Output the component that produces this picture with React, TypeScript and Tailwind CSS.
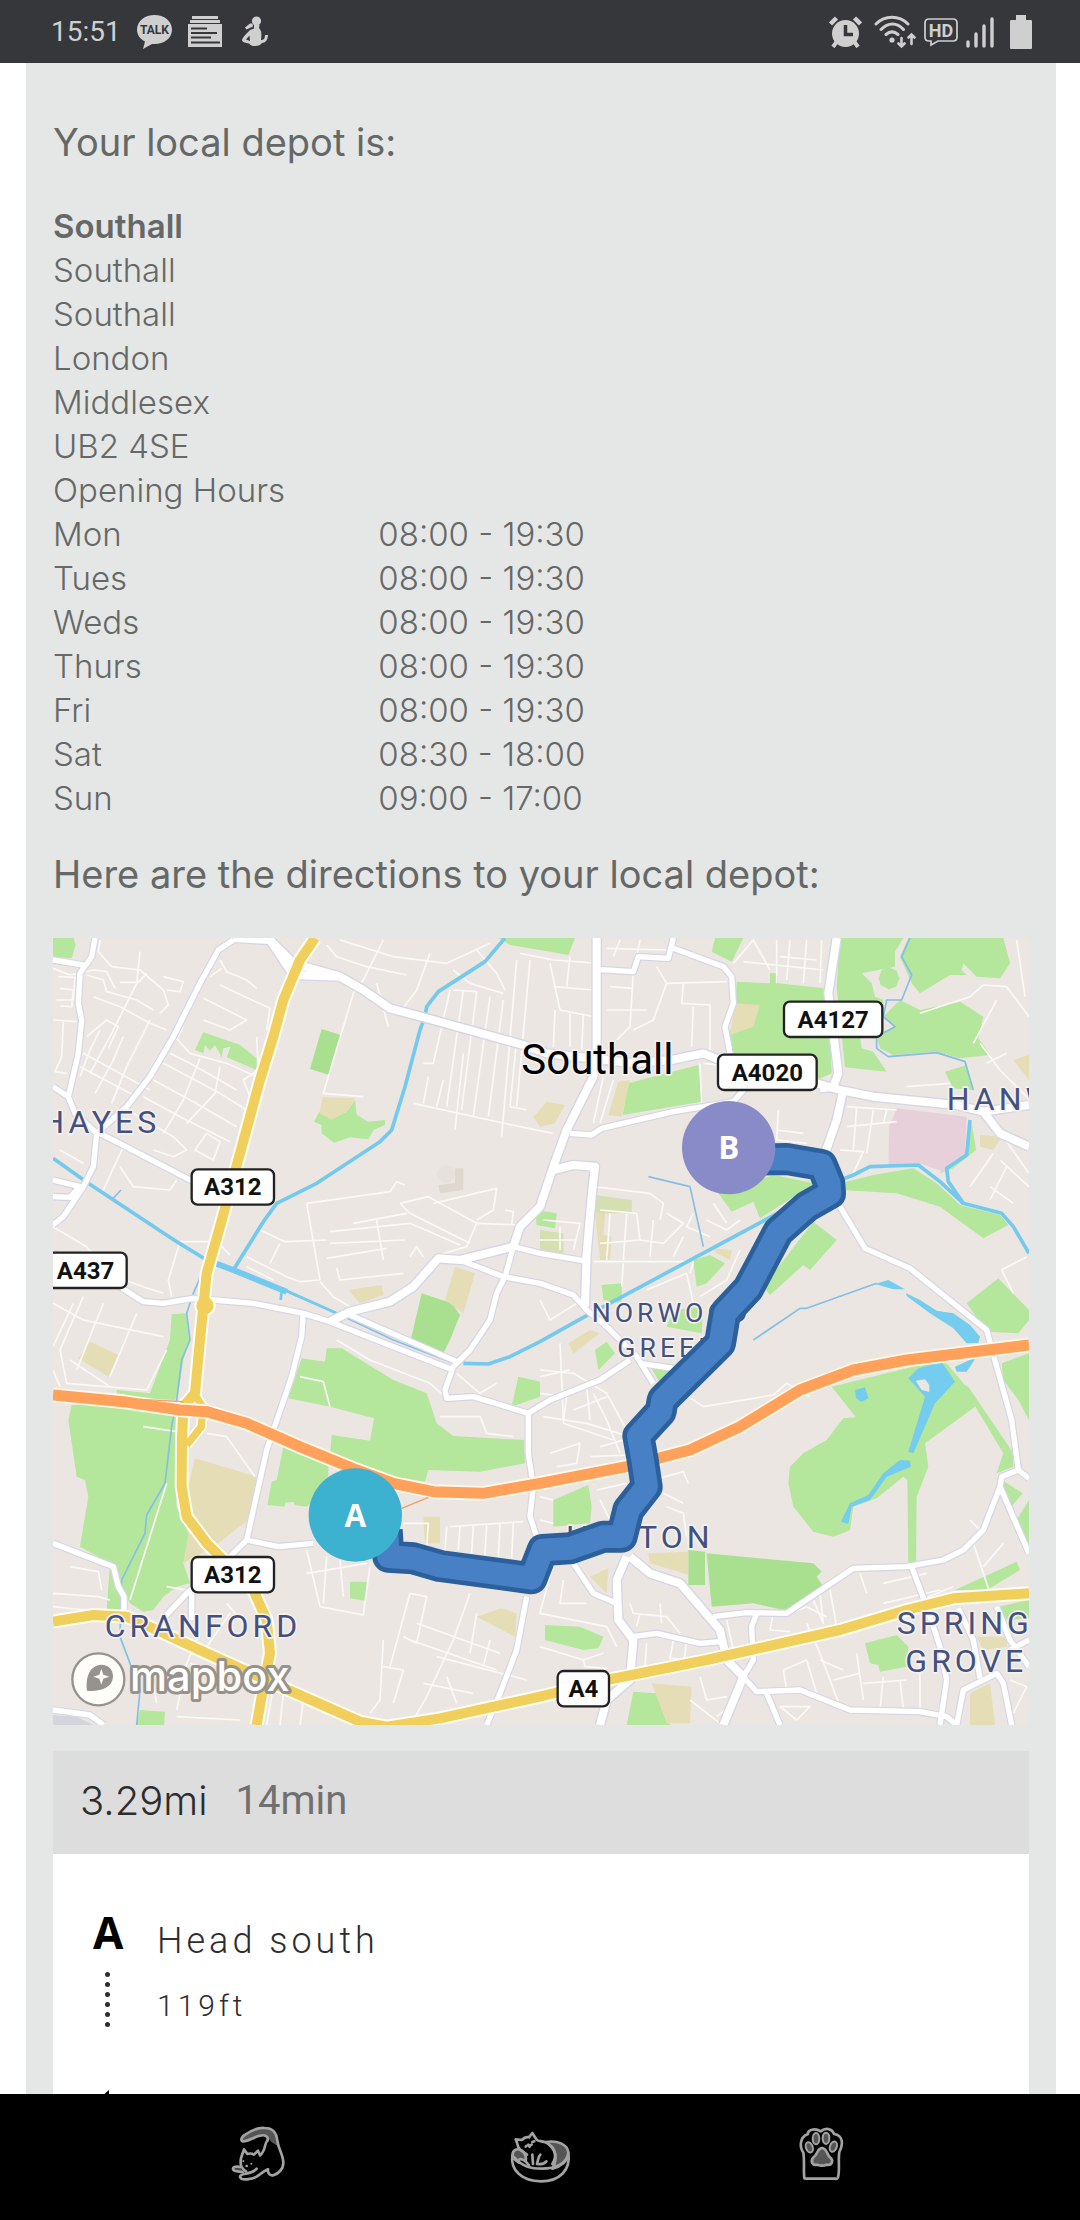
import type { ReactNode } from "react";

const address = ["Southall", "Southall", "London", "Middlesex", "UB2 4SE"];

const openingHours = [
  { day: "Mon", hours: "08:00 - 19:30" },
  { day: "Tues", hours: "08:00 - 19:30" },
  { day: "Weds", hours: "08:00 - 19:30" },
  { day: "Thurs", hours: "08:00 - 19:30" },
  { day: "Fri", hours: "08:00 - 19:30" },
  { day: "Sat", hours: "08:30 - 18:00" },
  { day: "Sun", hours: "09:00 - 17:00" },
];

const parks = [
  "39,54 100,54 107,75 95,115 39,110",
  "490,337 600,375 650,415 650,450 560,412 572,380 550,385 545,412 525,375 510,392 495,375 490,400 465,390",
  "945,540 950,585 985,605 1035,600 1035,615 1000,630 985,658 930,652 882,668 845,640 845,615 822,605 838,575 875,595 920,575",
  "1375,54 1605,54 1585,105 1500,90 1410,75",
  "2025,54 2110,54 2075,125 2015,95",
  "2090,185 2190,190 2190,160 2210,160 2215,190 2350,205 2365,240 2375,460 2330,480 2070,400 2060,345 2085,310",
  "2400,54 2590,54 2565,95 2565,140 2465,160 2495,190 2505,230 2530,240 2530,350 2460,350 2465,385 2500,395 2540,455 2415,442 2390,200",
  "2605,54 2890,54 2910,130 2880,175 2810,170 2770,130 2765,150 2780,165 2730,165 2640,220 2615,190 2580,110",
  "2516,175 2525,150 2546,142 2570,152 2578,175 2568,200 2546,208 2522,195",
  "2580,240 2640,270 2760,245 2830,290 2815,355 2850,405 2760,415 2690,395 2560,405 2520,385 2510,345 2560,320 2530,290",
  "2715,455 2780,435 2800,510 2740,505",
  "1765,490 1975,435 1985,545 1748,585",
  "2035,820 2200,765 2325,790 2230,850 2160,895 2140,845 2075,875",
  "2320,905 2390,960 2310,1050 2290,1035 2190,1125 2170,1100",
  "2420,785 2500,765 2620,745 2690,790 2760,855 2880,885 2905,915 2830,955 2700,860 2570,820 2410,810",
  "2795,610 2808,690 2740,745 2700,760 2720,720 2780,700",
  "2780,1150 2875,1075 2967,1170 2967,1200 2935,1240 2840,1235",
  "1960,1020 2010,1005 2055,1030 2000,1090 1970,1100",
  "1685,1095 1745,1090 1745,1150 1690,1140",
  "1485,870 1550,880 1545,925 1490,915",
  "1880,1220 1900,1170 1990,1160 1985,1240",
  "395,1183 437,1180 448,1260 430,1320 415,1420 405,1440 230,1430 230,1410 330,1420 390,1260",
  "95,1455 230,1455 410,1490 425,1530 405,1640 410,1760 450,1850 430,1930 450,1990 410,2000 370,2030 340,2070 310,2075 270,2050 240,2000 240,2070 200,2070 210,1930 120,1880 145,1730 135,1680 110,1670 85,1500",
  "785,1315 855,1325 860,1285 905,1285 1060,1380 1160,1420 1190,1510 1240,1548 1452,1560 1455,1630 1320,1655 1165,1650 1155,1685 1060,1670 870,1600 875,1545 990,1562 1002,1495 870,1460 745,1435",
  "730,1580 865,1635 865,1700 800,1760 765,1755 760,1745 735,1748 735,1760 682,1755 695,1685 710,1680",
  "1435,1370 1500,1385 1500,1430 1415,1460",
  "1665,1290 1700,1265 1725,1300 1675,1350",
  "1540,1740 1645,1695 1655,1760 1650,1810 1540,1820",
  "1835,1345 1900,1350 1860,1390",
  "2375,1400 2640,1335 2720,1330 2770,1390 2805,1460 2655,1570 2665,1640 2630,1730 2628,1930 2605,1930 2602,1680 2590,1670 2510,1735 2440,1760 2430,1830 2380,1850 2320,1835 2260,1760 2245,1690 2250,1640 2290,1600 2360,1560 2410,1495 2448,1492",
  "2765,1390 2785,1400 2920,1600 2920,1640 2870,1660 2890,1600 2800,1450",
  "2885,1330 2967,1300 2967,1500 2935,1440 2890,1380",
  "2885,1680 2948,1720 2905,1770",
  "2967,1740 2967,1880 2930,1800",
  "1515,2115 1620,2120 1690,2150 1675,2185 1630,2190 1515,2160",
  "2475,2170 2570,2145 2605,2180 2600,2240 2520,2255 2515,2235 2490,2230",
  "2745,2010 2930,1925 2940,1950 2840,2010",
  "2875,2060 2967,2040 2967,2095 2900,2100",
  "1780,2315 1850,2320 1890,2415 1760,2415",
  "300,2370 375,2375 372,2415 290,2415",
  "930,1985 980,1985 975,2042 930,2035",
];

const darkParks = [
  "845,327 902,345 868,465 810,447",
  "1145,1120 1235,1150 1260,1185 1230,1260 1210,1300 1110,1270",
  "2000,1900 2320,1930 2345,1955 2330,1970 2350,2000 2280,2060 2230,2070 2140,2050 2015,2060",
  "1945,1890 1995,1895 1995,1995 1945,1995",
];

const schools = [
  "848,532 945,535 920,575 875,600 838,580",
  "1245,1040 1305,1060 1270,1180 1215,1140",
  "925,1110 1025,1095 1030,1125 960,1150",
  "150,1265 235,1305 205,1370 115,1315",
  "465,1615 650,1670 625,1800 520,1880 430,1930 450,1810 445,1700",
  "2085,250 2160,255 2140,320 2070,345",
  "1735,485 1770,480 1745,590 1705,585",
  "1480,590 1520,545 1575,555 1545,610 1500,620",
  "1665,880 1695,880 1690,945 1715,950 1710,1020 1680,1020",
  "2015,985 2075,990 2070,1020 2030,1000",
  "1825,1900 1945,1895 1945,1965 1900,1950 1830,1930",
  "1650,1970 1705,1945 1700,2020",
  "1835,2290 1955,2300 1950,2410 1880,2410",
  "2790,2320 2850,2290 2865,2415 2790,2415",
  "2810,2150 2900,2150 2900,2180 2830,2190",
  "1150,1790 1200,1790 1200,1870 1155,1870",
  "1310,2090 1385,2065 1430,2080 1425,2150",
  "2820,645 2885,650 2860,690 2820,680",
  "2920,420 2967,405 2967,480",
  "1585,1270 1650,1230 1680,1240 1600,1300",
];

const lakes = [
  "2505,1092 2545,1080 2595,1108 2560,1108",
  "2598,1120 2640,1140 2690,1172 2740,1180 2790,1215 2820,1250 2815,1268 2780,1270 2740,1225 2670,1180 2600,1128",
  "2605,1375 2635,1345 2705,1325 2745,1385 2685,1450 2620,1600 2605,1595 2655,1430",
  "2745,1340 2810,1310 2780,1355 2750,1355",
  "2445,1410 2475,1402 2485,1435 2465,1446 2448,1435",
  "2610,1622 2612,1640 2540,1670 2490,1740 2435,1760 2425,1812 2403,1805 2430,1750 2485,1725 2530,1660 2580,1620",
];

const canals = [
  "39,715 145,790 410,965 500,1020",
  "1395,54 1335,125 1195,215 1160,260 1155,290 1140,330 1095,500 1055,630 1020,665 830,790 710,850 670,905 580,1050",
  "1270,1330 1345,1332 1410,1310 1500,1265 1625,1195 2250,860 2350,800 2440,765 2490,740 2635,735 2700,785 2770,850 2885,880 2920,920 2967,1000",
  "2790,600 2780,705 2720,745 2725,785 2770,850",
];

const streams = [
  "2610,54 2585,110 2615,165 2585,240 2540,240 2530,290 2565,320 2510,350 2510,385 2545,410 2690,398 2775,425 2800,510",
  "1825,770 1950,800 1990,980",
  "2140,1260 2280,1165 2300,1165 2510,1090",
  "495,1040 460,1120 440,1180 450,1260 425,1320 410,1440 395,1520 375,1690 320,1785 315,1840 245,1980 240,2150 270,2230 300,2310 290,2415",
  "215,840 243,810",
  "740,1115 890,1180 1060,1260 1240,1330",
];

const streets = [
  // Hayes
  "39,145 90,165 160,150 200,155 225,205", "180,60 175,95 215,140 300,150 370,210 385,255 360,280",
  "140,165 190,180 200,215 290,240 340,270", "240,187 295,187 320,160", "300,95 290,190 215,340 150,460",
  "370,170 430,185 420,215 380,210", "55,170 105,172 100,240 50,240", "60,205 100,210 95,260 60,258",
  "39,300 110,305", "70,305 65,410 45,455 80,460", "160,230 240,260 330,310 380,330", "180,330 150,390 120,470",
  "140,350 200,300 235,320 205,385", "130,400 330,510", "120,440 290,530", "250,350 215,430 165,520",
  "330,300 260,440 215,550", "540,120 560,155 620,180 650,205", "510,170 545,145", "540,195 690,265 680,330",
  "490,235 620,300 570,330 490,300", "430,320 410,355 450,400 560,430 650,470", "390,400 450,430 590,510",
  "370,430 540,520 620,570", "340,480 460,545 590,620", "310,530 420,590 570,665", "540,440 525,520 440,610",
  "480,415 430,540 370,640", "280,580 400,650 440,690 400,710 340,690", "500,640 540,665 520,720 465,690 500,640",
  "650,350 655,450 610,480 630,530", "250,680 190,810", "240,740 280,800 390,810 410,780", "60,690 130,730",
  // Southall west
  "860,75 890,110 980,140 1100,165", "1030,60 970,180 940,220 850,520 970,530", "900,60 1060,110 1220,130 1350,70",
  "1170,100 1130,210 1085,270", "1010,190 1045,320", "1240,150 1290,190 1390,220", "1310,90 1370,160 1395,210",
  "1120,550 1440,620 1540,640", "1230,210 1180,430 1150,430", "1270,210 1220,560", "1310,215 1265,570",
  "1350,230 1300,590", "1390,240 1345,590", "1430,120 1385,650", "1470,120 1430,560", "1240,210 1310,215",
  "1165,470 1150,550", "1210,480 1190,560", "1270,400 1245,630", "1430,360 1410,560 1460,570", "1440,100 1540,120",
  "800,850 1050,815 1070,785 1095,795", "800,850 840,1080 780,1085", "1080,850 1165,830 1310,910 1280,980 1180,1010",
  "1080,850 1110,880 1290,970", "1180,850 1370,805 1360,870 1310,900", "940,910 1100,880", "870,935 1110,910 1260,975",
  "860,1015 1040,985", "870,970 1095,960", "1010,900 1030,1020", "890,1045 900,1080 1090,1060", "860,960 735,965 660,930",
  "620,1010 740,1070 780,1085", "620,1040 700,1080", "690,1030 720,970", "840,1085 880,1130 930,1160", "1110,1010 1130,980 1150,1010",
  "1310,910 1440,915", "1395,870 1420,875 1415,915", "420,965 530,965 570,1005", "420,965 385,1080 395,1130",
  // Cranford
  "39,920 140,980 200,1060 310,1100 370,1120", "39,1150 130,1200 370,1250", "130,1130 60,1290 80,1390 320,1410 380,1290",
  "100,1150 39,1280", "190,1150 110,1350", "290,1180 210,1370", "90,1320 210,1400", "39,1350 60,1400", "310,1520 410,1535",
  "500,1540 560,1550 645,1670", "380,1690 270,2040", "39,2020 175,2030 210,2040", "39,2060 130,2070", "90,1940 175,1955 185,2010",
  "800,1890 840,2060 970,2085 990,1940", "800,1960 980,1930", "900,1920 910,2030", "860,1910 850,2050", "780,1370 850,1385 870,1460",
  "890,1260 990,1320 1170,1390 1215,1430", "1200,1490 1320,1490 1340,1540 1420,1550", "1250,1360 1320,1420 1370,1390",
  "1090,1810 1165,1810 1160,1880", "1230,1820 1450,1805", "1220,1820 1215,1890", "1260,1820 1255,1890", "1300,1815 1295,1900",
  "1340,1812 1335,1905", "1380,1810 1375,1910", "1420,1808 1415,1915", "1110,2020 1160,2030 1130,2170 1090,2150", "1110,2020 1050,2240",
  "1290,2020 1240,2160 1160,2330 1120,2400", "1130,2110 1380,2200", "1110,2160 1370,2250", "1190,2210 1460,2280", "1030,2160 1020,2340 990,2380",
  "1030,2240 1090,2250 1060,2350", "1310,2080 1290,2200", "1350,2160 1330,2240", "480,2140 440,2230 410,2370", "560,2050 620,2120",
  "410,2390 600,2400", "700,2300 680,2415", "730,2320 720,2415", "790,2340 780,2415", "330,2240 350,2350", "380,2000 440,2010",
  "450,2230 540,2260", "570,2080 500,2180", "1220,2270 1250,2350", "1150,2290 1300,2320",
  // Southall and Hanwell
  "1680,130 1540,120", "1530,130 1560,270 1660,290", "1590,110 1580,200", "1540,200 1660,210", "1545,270 1540,380",
  "1590,280 1590,380", "1630,285 1625,390", "1780,155 1770,320 1730,360", "1850,140 1880,190 1840,300 1780,330",
  "1880,190 2060,185", "1930,190 1925,250 2010,255 2010,390", "1960,260 1955,380", "1710,200 1780,205", "1700,270 1820,270",
  "1740,60 1720,110", "1800,60 1790,110", "1700,85 1880,90", "2080,130 2140,60 2190,150", "2110,125 2350,150", "2210,60 2210,190",
  "2250,60 2240,180", "2300,60 2290,190", "2345,60 2340,190", "2220,110 2330,120", "1980,430 1985,550", "1690,470 1660,610",
  "1720,480 1680,610", "1990,430 2080,440 2070,510", "2215,570 2210,660 2300,670", "2210,630 2290,640", "2420,560 2570,570",
  "2450,560 2440,690", "2500,570 2480,700", "2540,570 2530,610", "2420,620 2570,605", "2400,690 2470,695 2440,760", "2930,60 2955,230",
  "2640,280 2790,230 2830,195 2900,200 2967,290", "2800,370 2870,240", "2820,370 2880,450 2960,530", "2840,430 2900,400", "2600,500 2730,490",
  "2890,650 2967,760", "2860,700 2790,800", "2880,720 2967,800", "2850,800 2920,850", "2900,740 2850,840", "2960,1010 2885,1050 2920,1120",
  // Norwood Green
  "1660,800 1830,820 1870,850 1860,900", "1680,870 1790,880 1800,960 1680,970", "1710,880 1700,1020", "1760,880 1750,1020",
  "1800,960 1870,970 1930,910 1880,880", "1660,1025 1960,1025 1950,1060", "1750,1030 1745,1100", "1840,900 1830,1010", "2000,900 2060,930 2100,900",
  "1960,880 1940,920 2010,950", "2020,850 2060,910", "1900,1010 1930,950", "2100,990 2060,1080 1980,1130", "1510,900 1620,910 1600,990",
  "1500,960 1610,960", "1560,920 1560,990", "1500,1140 1530,1200 1610,1150", "1820,1110 1940,1060 1960,1150",
  // Heston
  "1500,1350 1600,1360 1700,1420 1760,1530", "1500,1420 1580,1430 1570,1510 1720,1560", "1510,1490 1640,1510 1770,1550",
  "1530,1600 1620,1570 1610,1630 1550,1640", "1660,1420 1700,1500 1740,1600", "1600,1470 1700,1430", "1680,1580 1770,1555",
  "1560,1270 1570,1500", "1500,1370 1590,1350", "1640,1400 1650,1500", "1650,1610 1770,1605", "1670,1710 1760,1690", "1930,1420 1990,1460 2200,1425 2240,1390 2310,1430",
  "1840,1680 1930,1655 1945,1690", "1870,1720 1930,1750", "1880,1760 1930,1780 1940,1850", "1680,1740 1710,1800", "1500,1730 1540,1740", "1500,1800 1540,1810",
  "1540,1930 1500,2080 1700,2120 1730,2180", "1570,1980 1560,2050 1640,2050", "1500,2180 1630,2220 1690,2200", "1630,2220 1635,2240 1700,2245",
  "1770,2050 1780,2080 1880,2090 1920,2140", "1860,2050 1865,2110", "1800,2080 1790,2120", "1820,2170 1815,2240", "1900,2160 1890,2215 1960,2220", "1940,2160 1930,2240",
  "2060,2100 2080,2190", "2200,2080 2190,2130 2250,2135", "2320,2040 2350,2110 2340,2020", "2250,2080 2300,2060 2360,2090", "2370,2010 2390,2120", "2460,1960 2480,2020",
  "2530,1990 2660,1960", "2300,2110 2340,2200 2400,2360", "2340,2220 2410,2250", "2230,2250 2300,2220 2330,2320 2240,2310 2230,2250", "2450,2200 2470,2340",
  "2470,2290 2600,2280", "2530,2270 2520,2370", "2580,2280 2590,2370", "2460,2260 2380,2280", "2220,2360 2270,2400 2310,2360 2220,2360", "2640,2200 2640,2370",
  "2800,1870 2850,2020", "2740,2000 2640,2040", "2890,1870 2830,1940", "2790,1800 2820,1830", "2080,2350 2030,2390", "1950,2340 2040,2410", "1980,2270 2000,2340 2060,2330",
  "2910,2280 2960,2300 2920,2380", "2530,2050 2700,2010",
];

const mainRoads = [
  "165,54 155,110 120,160 115,250 125,300 115,400 85,530 105,580 170,640",
  "39,120 130,135",
  "39,500 85,530",
  "580,60 535,90 480,190 400,350 330,470 260,560 170,640 160,740 130,800 70,890 39,915",
  "170,635 460,785",
  "39,830 90,832 120,800 39,780",
  "39,1000 150,1050 240,1100 310,1145 370,1150 460,1135 520,1140 640,1150 790,1180 870,1205 1060,1280 1240,1350",
  "1420,980 1500,1000 1630,1022",
  "1260,1020 1390,1070 1500,1090 1600,1125 1640,1170 1700,1220 1790,1310 1840,1390",
  "1420,980 1395,1070 1370,1120 1350,1200 1290,1290 1240,1340 1215,1410 1220,1435 1300,1430 1465,1480",
  "930,1185 1250,1325",
  "1590,640 1655,645 1685,625 1900,575 2080,545 2120,500",
  "1670,148 1780,155 1795,110 1885,115 1900,54",
  "1900,85 2050,140 2075,170 2080,250 2055,320 2070,400",
  "2400,860 2475,985 2610,1045 2840,1230 2870,1340 2915,1500 2935,1650 2885,1670 2880,1700 2830,1830 2770,1890 2710,1920 2600,1940 2440,1945 2240,2080 2120,2078 2020,2090",
  "2880,1700 2967,1900",
  "2935,1650 2967,1675",
  "790,1180 785,1250 755,1370 680,1590 620,1860 570,1910 440,2020 370,2095",
  "620,1860 715,1880 820,1870",
  "455,2010 455,2100",
  "39,1870 220,1940 235,2000 252,2030 252,2080",
  "1465,1480 1465,1600 1480,1700 1470,1790 1490,1850",
  "1465,1480 1530,1440 1680,1380 1770,1320",
  "1800,1330 1900,1345",
  "1460,2030 1430,2190 1380,2320 1340,2415",
  "1600,1930 1660,2020 1730,2050",
  "1780,2150 1850,2140 1980,2170 2040,2165",
  "2150,2080 2135,2120 2140,2220 2110,2270 2150,2315 2280,2310 2430,2370 2640,2375 2720,2390 2750,2415",
  "2180,2320 2220,2415",
  "2615,1940 2660,2060 2700,2180 2720,2280 2700,2415",
  "2755,2065 2800,2160 2820,2275",
  "2870,2060 2910,2160 2967,2240",
  "2910,2190 2967,2160",
  "2750,2415 2770,2310 2870,2260 2890,2290 2915,2415",
  "39,2370 150,2385 190,2415",
];

const wideRoads = [
  "580,54 690,60 760,130 900,170 970,210 1050,265 1180,300 1450,375 1520,400 1780,430 1895,420 1990,400 2050,425 2330,490 2400,510 2500,530 2750,555 2830,575 2967,555",
  "690,60 760,165 900,170",
  "870,1205 930,1175 1050,1145 1120,1100 1195,1015 1260,1020 1420,980 1440,920 1500,860 1540,740 1580,630 1660,470 1670,400 1670,54",
  "1540,750 1600,735 1665,740 1655,830 1640,1000 1635,1160",
  "2390,54 2365,220 2395,460 2380,500 2340,505",
  "2410,510 2390,600 2355,700",
  "2830,575 2880,640 2967,680",
  "1760,1910 1730,1980 1735,2100 1780,2160 1770,2280 1700,2340 1680,2415",
  "1770,1910 1830,1960 1920,1990 1980,2060 2040,2130 2060,2220 2110,2270 2050,2415",
];

const primaryRoads = [
  "825,54 780,120 730,240 700,350 660,480 600,700 540,920 500,1060 490,1160 480,1260 465,1420 430,1460 426,1560 425,1700 440,1790 500,1870 580,1950 640,2010 680,2100 690,2200 670,2300 650,2415",
  "39,2105 160,2085 260,2090 350,2130 500,2200 700,2290 960,2405 1040,2420 1200,2395 1500,2330 1700,2280 2000,2220 2400,2130 2600,2070 2740,2035 2967,2020",
];

const junctionLoop = "465,1425 488,1460 484,1520 440,1575";

const motorway =
  "39,1425 250,1445 420,1470 500,1475 620,1510 780,1580 950,1650 1060,1690 1180,1715 1330,1720 1500,1690 1760,1640 1950,1590 2100,1520 2280,1410 2440,1350 2600,1320 2967,1275";

const route =
  "1040,1830 1045,1910 1120,1915 1200,1938 1475,1975 1508,1890 1590,1885 1690,1850 1745,1850 1765,1770 1820,1700 1808,1620 1795,1548 1862,1475 1868,1440 2040,1270 2055,1180 2125,1105 2215,935 2300,860 2370,820 2368,790 2345,735 2240,717 2100,720";

const places = [
  { name: "HAYES", x: 4, y: 640, size: 96 },
  { name: "CRANFORD", x: 194, y: 2152, size: 96 },
  { name: "NORWOOD", x: 1655, y: 1205, size: 80 },
  { name: "GREEN", x: 1732, y: 1310, size: 80 },
  { name: "HESTON", x: 1578, y: 1885, size: 96 },
  { name: "SPRING", x: 2570, y: 2142, size: 96 },
  { name: "GROVE", x: 2596, y: 2256, size: 96 },
  { name: "HANWELL", x: 2720, y: 570, size: 96 },
];

const shields = [
  { name: "A312", x: 455, y: 748, width: 247 },
  { name: "A437", x: 13, y: 998, width: 247 },
  { name: "A4127", x: 2232, y: 245, width: 295 },
  { name: "A4020", x: 2034, y: 404, width: 296 },
  { name: "A312", x: 455, y: 1911, width: 247 },
  { name: "A4", x: 1553, y: 2253, width: 154 },
];

interface LinesProps {
  lines: string[];
  color: string;
  width: number;
}

function Lines({ lines, color, width }: LinesProps) {
  return (
    <g fill="none" stroke={color} strokeWidth={width} strokeLinejoin="round">
      {lines.map((points, i) => (
        <polyline key={i} points={points} />
      ))}
    </g>
  );
}

function Areas({ areas, color }: { areas: string[]; color: string }) {
  return (
    <g fill={color}>
      {areas.map((points, i) => (
        <polygon key={i} points={points} />
      ))}
    </g>
  );
}

function RouteMap() {
  return (
    <svg
      viewBox="39 54 2928 2361"
      role="img"
      aria-label="Map of the route to Southall depot"
      className="block h-auto w-full bg-[#ebe6e1] font-['Roboto',sans-serif]"
    >
      <Areas areas={parks} color="#b4e69c" />
      <Areas areas={darkParks} color="#a9e08f" />
      <Areas areas={schools} color="#e5ddb5" />
      <Areas areas={["1665,825 1775,840 1775,880 1660,880", "1500,930 1570,940 1570,1000 1500,1000"]} color="#d5dfb2" />
      <Areas areas={["2570,565 2780,590 2775,700 2710,755 2640,730 2545,735 2548,620"]} color="#e8d0da" />
      <Areas areas={["39,2385 110,2390 160,2415 39,2415"]} color="#d4d4dc" />
      <polygon points="1195,795 1245,790 1245,745 1270,745 1270,810 1200,820" fill="#ded8cf" />
      <circle cx="1218" cy="762" r="27" fill="#e6e1db" />
      <Lines lines={streets} color="#faf9f7" width={5} />
      <Lines lines={streams} color="#84bfe6" width={5} />
      <Lines lines={canals} color="#74c9ee" width={11} />
      <Lines lines={["500,1020 580,1050 740,1115"]} color="#74c9ee" width={18} />
      <Lines lines={["740,1112 890,1180", "725,1110 722,1140"]} color="#74c9ee" width={8} />
      <Areas areas={lakes} color="#74ccee" />
      <polygon points="2627,1382 2655,1378 2668,1395 2668,1416 2645,1410" fill="#ebe6e1" />

      <Lines lines={mainRoads} color="#d6d5e6" width={23} />
      <Lines lines={wideRoads} color="#d6d5e6" width={32} />
      <Lines lines={mainRoads} color="#ffffff" width={16} />
      <Lines lines={wideRoads} color="#ffffff" width={24} />

      <Lines lines={primaryRoads} color="#fffdf2" width={42} />
      <Lines lines={[junctionLoop]} color="#fffdf2" width={32} />
      <circle cx="495" cy="1157" r="32" fill="#fffdf2" />
      <Lines lines={primaryRoads} color="#f0cf5c" width={30} />
      <Lines lines={[junctionLoop]} color="#f0cf5c" width={22} />
      <circle cx="495" cy="1157" r="26" fill="#f0cf5c" />
      <Lines lines={[motorway]} color="#fff8e8" width={44} />
      <Lines lines={[motorway]} color="#ffa15b" width={33} />
      <Lines lines={["1085,1765 1165,1732", "300,1438 430,1445", "500,1460 600,1492"]} color="#f2a06a" width={4} />

      <g fill="#44507d" stroke="#f4f1ef" strokeWidth="10" paintOrder="stroke" strokeLinejoin="round">
        {places.map((place) => (
          <text key={place.name} x={place.x} y={place.y} fontSize={place.size} className="tracking-[12px]">
            {place.name}
          </text>
        ))}
        <text x="1444" y="462" fontSize="126" fill="#000000">
          Southall
        </text>
      </g>

      {shields.map((shield) => (
        <g key={`${shield.x}-${shield.y}`}>
          <rect
            x={shield.x}
            y={shield.y}
            width={shield.width}
            height="106"
            rx="18"
            fill="#ffffff"
            stroke="#222222"
            strokeWidth="7"
          />
          <text
            x={shield.x + shield.width / 2}
            y={shield.y + 78}
            fontSize="72"
            fontWeight="700"
            fill="#111111"
            textAnchor="middle"
          >
            {shield.name}
          </text>
        </g>
      ))}

      <Lines lines={[route]} color="#2b609c" width={96} />
      <Lines lines={[route]} color="#4780c4" width={68} />

      <g fontSize="94" fontWeight="700" textAnchor="middle" className="font-['Open_Sans',sans-serif]">
        <circle cx="946" cy="1785" r="140" fill="#3cb1d0" />
        <text x="946" y="1820" fill="#ffffff">
          A
        </text>
        <circle cx="2066" cy="683" r="140" fill="#898bc8" />
        <text x="2066" y="718" fill="#ffffff">
          B
        </text>
      </g>

      <circle cx="175" cy="2278" r="78" fill="#fffefa" stroke="#96938e" strokeWidth="7" />
      <path
        d="M141 2312 C136 2270 150 2236 184 2234 C206 2234 220 2250 219 2270 C218 2302 180 2316 141 2312 Z"
        fill="#96938e"
      />
      <path d="M184 2246 L190 2264 L208 2270 L190 2276 L184 2294 L178 2276 L160 2270 L178 2264 Z" fill="#fffefa" />
      <text
        x="270"
        y="2312"
        fontSize="125"
        fontWeight="500"
        fill="#fffefa"
        stroke="#96938e"
        strokeWidth="18"
        strokeLinejoin="round"
        paintOrder="stroke"
        className="font-['Inter',sans-serif]"
      >
        mapbox
      </text>
    </svg>
  );
}

function StatusBar() {
  return (
    <header className="flex h-[63px] shrink-0 items-center justify-between bg-[#36373b] pr-12 pl-[51px] text-[#cfcfd0]">
      <div className="flex items-center">
        <time className="mr-4 font-['Roboto',sans-serif] text-[28px] leading-9">15:51</time>
        <svg viewBox="0 0 35 34" className="mr-4 h-[34px] w-[35px] fill-current" role="img" aria-label="Talk message">
          <path d="M17.500 0C8 0 0 6 0 14.500C0 20 3 24 8 26.500L6 34L15 29C26 30 35 24 35 14.500C35 6 27 0 17.500 0Z" />
          <text
            x="17.5"
            y="19"
            fontSize="12"
            fontWeight="700"
            textAnchor="middle"
            fill="#36373b"
            className="font-['Roboto',sans-serif]"
          >
            TALK
          </text>
        </svg>
        <svg viewBox="0 0 34 31" className="mr-5 h-[31px] w-[34px] fill-current" aria-hidden="true">
          <path d="M4 0H30V3H4ZM2 4H32V7H2ZM0 8H34V31H0Z" />
          <path d="M3 12.500H19M3 17H29M3 21.500H23M3 26.500H32" stroke="#36373b" strokeWidth="1.8" />
        </svg>
        <svg viewBox="0 0 26 31" className="h-[31px] w-[26px] fill-current" aria-hidden="true">
          <circle cx="14.500" cy="5" r="4.600" />
          <path d="M10.500 7.500L8 7.500L3 11.500L4.500 13.500L11 10.500ZM12 9H17.500L17 12C20 15 19.500 19 19 24C22 24 23 22 23 19L26 19C26 24 23 27 20 27C18 31 9 31 7 27.500C4 27 0 26.500 0 24C1 21 5 17 8 14L12 12.500ZM7.500 19.500L4 23.500L8 25Z" />
        </svg>
      </div>
      <div className="flex items-center">
        <svg viewBox="0 0 33 32" className="mr-3 h-8 w-[33px]" role="img" aria-label="Alarm set">
          <circle cx="16.500" cy="17.500" r="13.500" fill="currentColor" />
          <path d="M1.500 8L7.500 2M31.500 8L25.500 2" stroke="currentColor" strokeWidth="4.500" />
          <path d="M7.500 26L4 31M25.500 26L29 31" stroke="currentColor" strokeWidth="4" />
          <path d="M16.500 9V18.500H24" fill="none" stroke="#36373b" strokeWidth="3.500" />
        </svg>
        <svg
          viewBox="0 0 42 34"
          className="mr-2 h-[34px] w-[42px]"
          fill="none"
          stroke="currentColor"
          strokeWidth="3"
          strokeLinecap="round"
          role="img"
          aria-label="Wi-Fi"
        >
          <path d="M2 9C11 0 25 0 34 9M7 14.500C14 7 23 7 29.500 14.500M12 19.500C16 16 20 16 24 19.500" />
          <circle cx="18" cy="25" r="2.600" fill="currentColor" stroke="none" />
          <path
            d="M27.500 23V31M24.500 28.500L27.500 31.500L30.500 28.500M37.500 29V20M34.500 22.500L37.500 19.500L40.500 22.500"
            strokeWidth="2.600"
          />
        </svg>
        <svg viewBox="0 0 34 30" className="mr-2 h-[30px] w-[34px]" role="img" aria-label="HD voice">
          <path
            d="M5 2H29Q33 2 33 6V20Q33 24 29 24H14L7 28V24H5Q1 24 1 20V6Q1 2 5 2Z"
            fill="none"
            stroke="currentColor"
            strokeWidth="1.700"
          />
          <text
            x="17"
            y="19.5"
            fontSize="18"
            fontWeight="700"
            textAnchor="middle"
            fill="currentColor"
            className="font-['Roboto',sans-serif]"
          >
            HD
          </text>
        </svg>
        <svg viewBox="0 0 28 32" className="mr-4 h-8 w-7" role="img" aria-label="Signal">
          <path
            d="M2 26V30M10 18V30M18 10V30M26 3V30"
            stroke="currentColor"
            strokeWidth="3.400"
            strokeLinecap="round"
          />
        </svg>
        <svg viewBox="0 0 22 34" className="h-[34px] w-[22px] fill-current" role="img" aria-label="Battery full">
          <path d="M6 0H16V5H21Q22 5 22 6V33Q22 34 21 34H1Q0 34 0 33V6Q0 5 1 5H6Z" />
        </svg>
      </div>
    </header>
  );
}

function NavButton({ label, children }: { label: string; children: ReactNode }) {
  return (
    <button type="button" aria-label={label} className="flex items-center justify-center">
      <svg
        viewBox="0 0 210 210"
        className="size-[70px]"
        fill="none"
        stroke="#a3a3a3"
        strokeWidth="8"
        strokeLinecap="round"
        strokeLinejoin="round"
      >
        {children}
      </svg>
    </button>
  );
}

function NavigationBar() {
  return (
    <nav aria-label="System" className="grid h-[126px] shrink-0 grid-cols-3 bg-black px-[118px] pb-1">
      <NavButton label="Recent apps">
        <path
          d="M54 62C48 56 54 50 62 45C80 32 100 22 122 24C148 24 158 42 160 62L164 80L142 66L128 48C108 42 92 50 78 58C68 64 58 66 54 62Z"
          fill="#555555"
          stroke="none"
        />
        <path d="M130 62C136 50 122 43 108 47C86 52 72 66 56 64C48 60 54 50 62 45C80 32 100 22 122 24C148 24 158 42 160 62C163 88 178 104 178 128C178 148 162 162 148 166C138 168 131 160 132 148C122 152 112 160 98 170C84 178 62 180 52 176C44 170 50 164 60 162C74 160 90 156 98 146" />
        <path d="M130 62C120 72 126 92 108 106L102 92L90 104C84 100 76 100 70 102L60 88C56 102 48 114 50 128C50 138 56 148 66 154" />
        <path d="M50 141C38 138 26 140 27 148C30 156 44 154 56 156" fill="#444444" />
        <circle cx="58" cy="123" r="3" fill="#a3a3a3" stroke="none" />
        <circle cx="82" cy="131" r="3" fill="#a3a3a3" stroke="none" />
        <circle cx="68" cy="138" r="4" fill="#a3a3a3" stroke="none" />
      </NavButton>
      <NavButton label="Home">
        <path d="M122 66C160 60 188 74 190 98C192 122 166 140 142 146C156 120 158 90 122 66Z" fill="#555555" />
        <path d="M42 88C26 86 18 100 26 116L42 128C38 118 46 112 62 124C66 106 56 92 42 88Z" fill="#555555" />
        <path d="M44 88C36 78 38 68 32 58L50 60C58 52 66 50 72 52L82 39L94 58C96 64 112 62 124 68C148 80 160 104 142 132" />
        <path d="M44 88L66 104M82 104L84 132M106 104C98 112 100 120 96 132M96 132C110 134 118 132 124 124M62 124L72 136" />
        <path d="M22 106C16 150 50 184 108 184C164 184 198 150 190 98C186 132 150 146 110 146C80 146 54 142 28 112" />
        <path d="M62 80L64 78M76 76L80 74M82 66L88 64M70 74L74 80" />
      </NavButton>
      <NavButton label="Back">
        <path d="M55 175C52 150 56 120 52 98C42 84 38 52 66 42C64 30 86 22 104 34C122 20 140 28 144 42C172 46 172 72 160 96C156 120 162 150 156 172Q154 178 148 176H60Q56 176 55 175Z" />
        <ellipse cx="90" cy="56" rx="10" ry="17" fill="#555555" strokeWidth="6" />
        <ellipse cx="120" cy="55" rx="10" ry="17" fill="#555555" strokeWidth="6" />
        <ellipse cx="70" cy="82" rx="10" ry="16" fill="#555555" strokeWidth="6" transform="rotate(-20 70 82)" />
        <ellipse cx="142" cy="80" rx="10" ry="16" fill="#555555" strokeWidth="6" transform="rotate(20 142 80)" />
        <path
          d="M108 84C92 86 96 104 82 112C72 124 80 138 94 134C104 138 114 138 122 134C138 138 144 122 132 112C122 104 124 86 108 84Z"
          fill="#555555"
        />
      </NavButton>
    </nav>
  );
}

export default function App() {
  return (
    <div className="flex h-screen flex-col bg-white font-['Inter','Open_Sans',sans-serif] text-[#666867]">
      <StatusBar />
      <main className="min-h-0 flex-1 overflow-hidden pr-6 pl-[26px]">
        <div className="bg-[#e5e7e6] px-[27px] pt-[55px]">
          <h2 className="mb-[38px] text-[38px] leading-[48px]">Your local depot is:</h2>
          <address className="text-[33px] leading-11 font-light not-italic">
            <p className="font-semibold">Southall</p>
            {address.map((line, i) => (
              <p key={i}>{line}</p>
            ))}
          </address>
          <table className="w-full text-left text-[33px] leading-11 font-light">
            <caption className="text-left">Opening Hours</caption>
            <tbody>
              {openingHours.map((row) => (
                <tr key={row.day}>
                  <th scope="row" className="w-1/3 p-0 font-light">
                    {row.day}
                  </th>
                  <td className="p-0">{row.hours}</td>
                </tr>
              ))}
            </tbody>
          </table>
          <h2 className="mt-[30px] mb-10 text-[38px] leading-[48px]">Here are the directions to your local depot:</h2>
          <RouteMap />
          <section className="mt-[26px] bg-white text-[#2d2d2d]">
            <div className="flex items-center gap-7 bg-[#dddddd] px-[27px] pt-[22px] pb-[26px]">
              <h3 className="text-[40px] leading-[55px] font-light">3.29mi</h3>
              <p className="font-['Roboto',sans-serif] text-[40px] leading-[55px] text-[#707070]">14min</p>
            </div>
            <ol className="px-10 pt-14">
              <li className="flex h-[180px] gap-7">
                <div className="flex w-9 flex-col items-start">
                  <span className="font-['Open_Sans',sans-serif] text-[44px] leading-[44px] font-bold text-black">A</span>
                  <span className="mt-[18px] ml-3 flex flex-col gap-[5px]" aria-hidden="true">
                    <i className="size-[5px] rounded-full bg-[#2d2d2d]" />
                    <i className="size-[5px] rounded-full bg-[#2d2d2d]" />
                    <i className="size-[5px] rounded-full bg-[#2d2d2d]" />
                    <i className="size-[5px] rounded-full bg-[#2d2d2d]" />
                    <i className="size-[5px] rounded-full bg-[#2d2d2d]" />
                    <i className="size-[5px] rounded-full bg-[#2d2d2d]" />
                  </span>
                </div>
                <div className="pt-1.5 font-['Roboto',sans-serif] font-light tracking-[4px]">
                  <p className="text-4xl leading-[50px]">Head south</p>
                  <p className="mt-5 text-[30px] leading-10">119ft</p>
                </div>
              </li>
              <li className="h-16">
                <svg viewBox="0 0 36 36" className="size-9" role="img" aria-label="Turn left">
                  <path d="M16 0L0 14L16 32V22H36V10H16Z" fill="#000000" />
                </svg>
              </li>
            </ol>
          </section>
        </div>
      </main>
      <NavigationBar />
    </div>
  );
}
